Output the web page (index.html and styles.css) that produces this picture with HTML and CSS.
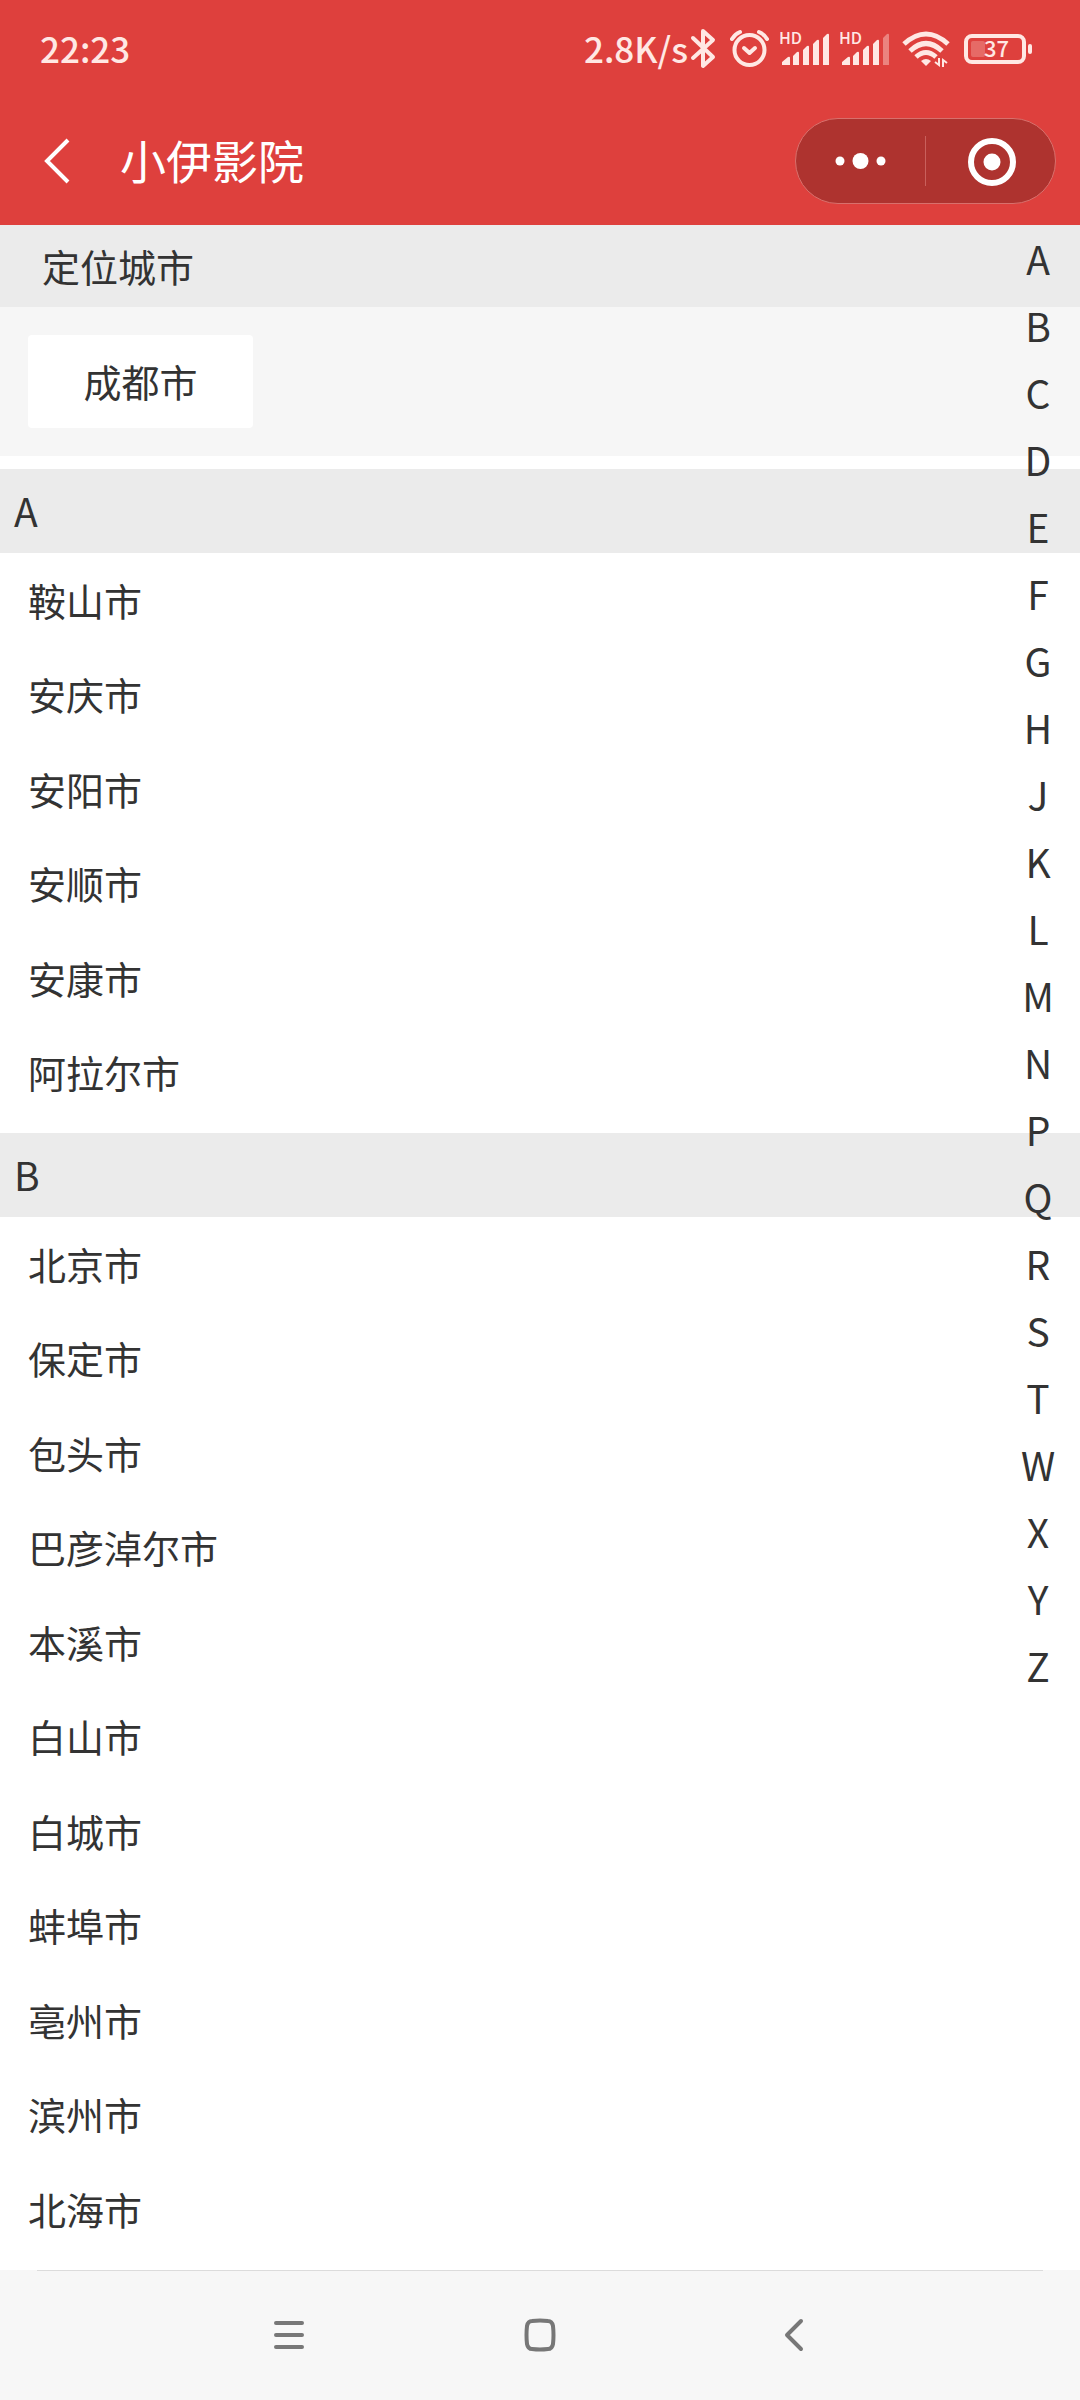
FILE: index.html
```html
<!DOCTYPE html>
<html lang="zh-CN">
<head>
<meta charset="utf-8">
<meta name="viewport" content="width=device-width, initial-scale=1">
<title>小伊影院</title>
<link rel="stylesheet" href="styles.css">
</head>
<body>
<header class="top">
  <div class="status">
    <time class="clock">22:23</time>
    <div class="indicators">
      <div class="network">
        <span>2.8K/s</span>
        <svg width="30" height="44" viewBox="0 0 30 44" fill="none" stroke="currentColor" stroke-width="4" stroke-linecap="round" stroke-linejoin="round" aria-hidden="true"><path d="M3 12 23 31 13 40V5L23 14 3 32"/></svg>
      </div>
      <svg width="40" height="44" viewBox="0 0 40 44" fill="none" stroke="currentColor" stroke-width="4" stroke-linecap="round" stroke-linejoin="round" aria-hidden="true"><circle cx="19.500" cy="24" r="15"/><path d="M2 13Q5 8 10 6M37 13Q34 8 29 6"/><path d="M14 22l5.500 5 5.500-5"/></svg>
      <svg class="signal" width="50" height="44" viewBox="0 0 50 44" fill="currentColor" aria-hidden="true"><text x="-1" y="18">HD</text><path d="M2 39v-3l6-5q2-1 2 1v7zM13 39V30l4-4q2-1 2 1v12zM23 39V24l4-4q2-1 2 1v18zM33 39V18l4-4q2-1 2 1v24zM43 39V12l4-4q2-1 2 1v30z"/></svg>
      <svg class="signal" width="50" height="44" viewBox="0 0 50 44" fill="currentColor" aria-hidden="true"><text x="-1" y="18">HD</text><path d="M2 39v-3l6-5q2-1 2 1v7zM13 39V30l4-4q2-1 2 1v12zM23 39V24l4-4q2-1 2 1v18zM33 39V18l4-4q2-1 2 1v24z"/><path opacity=".4" d="M43 39V12l4-4q2-1 2 1v30z"/></svg>
      <svg width="50" height="44" viewBox="0 0 50 44" fill="none" stroke="currentColor" stroke-width="5" aria-hidden="true"><path d="M4 18Q26-2 48 18M10 25Q26 10 42 25M16 31Q26 22 36 31"/><path d="M26 40l-5-5q5-4 10 0z" fill="currentColor" stroke="none"/><path d="M39 32v7l-4-3M43 41v-7l4 3" stroke-width="2"/></svg>
      <svg class="battery" width="72" height="44" viewBox="0 0 72 44" fill="currentColor" aria-hidden="true"><rect x="6" y="10" width="58" height="26" rx="6" fill="none" stroke="currentColor" stroke-width="4"/><rect x="11" y="15" width="14" height="16" rx="2" opacity=".25"/><rect x="68" y="18" width="4" height="10" rx="2"/><text x="24" y="31">37</text></svg>
    </div>
  </div>
  <div class="titlebar">
    <button class="back" aria-label="返回"><svg width="26" height="46" viewBox="0 0 26 46" fill="none" stroke="currentColor" stroke-width="4"><path d="M24 2 3 23 24 44"/></svg></button>
    <h1>小伊影院</h1>
    <div class="capsule">
      <button aria-label="更多"><svg width="52" height="50" viewBox="0 0 52 50" fill="currentColor"><circle cx="5" cy="25" r="4.500"/><circle cx="25.500" cy="25" r="8"/><circle cx="46" cy="25" r="4.500"/></svg></button>
      <button aria-label="关闭"><svg width="50" height="50" viewBox="0 0 50 50"><circle cx="26" cy="26" r="21" fill="none" stroke="currentColor" stroke-width="6"/><circle cx="26" cy="26" r="8.500" fill="currentColor"/></svg></button>
    </div>
  </div>
</header>

<main class="content">
  <section>
    <h2 class="located-title">定位城市</h2>
    <div class="located"><button class="chip">成都市</button></div>
  </section>
  <section id="A">
    <h2 class="letter">A</h2>
    <ul class="cities">
      <li><a href="#">鞍山市</a></li>
      <li><a href="#">安庆市</a></li>
      <li><a href="#">安阳市</a></li>
      <li><a href="#">安顺市</a></li>
      <li><a href="#">安康市</a></li>
      <li><a href="#">阿拉尔市</a></li>
    </ul>
  </section>
  <section id="B">
    <h2 class="letter">B</h2>
    <ul class="cities">
      <li><a href="#">北京市</a></li>
      <li><a href="#">保定市</a></li>
      <li><a href="#">包头市</a></li>
      <li><a href="#">巴彦淖尔市</a></li>
      <li><a href="#">本溪市</a></li>
      <li><a href="#">白山市</a></li>
      <li><a href="#">白城市</a></li>
      <li><a href="#">蚌埠市</a></li>
      <li><a href="#">亳州市</a></li>
      <li><a href="#">滨州市</a></li>
      <li><a href="#">北海市</a></li>
    </ul>
  </section>
  <nav class="index" aria-label="字母索引">
    <a href="#A">A</a><a href="#B">B</a><a href="#C">C</a><a href="#D">D</a><a href="#E">E</a><a href="#F">F</a><a href="#G">G</a><a href="#H">H</a><a href="#J">J</a><a href="#K">K</a><a href="#L">L</a><a href="#M">M</a><a href="#N">N</a><a href="#P">P</a><a href="#Q">Q</a><a href="#R">R</a><a href="#S">S</a><a href="#T">T</a><a href="#W">W</a><a href="#X">X</a><a href="#Y">Y</a><a href="#Z">Z</a>
  </nav>
</main>

<footer class="sysnav">
  <button aria-label="菜单"><svg width="32" height="34" viewBox="0 0 32 34" fill="none" stroke="currentColor" stroke-width="4" stroke-linecap="round"><path d="M4 5h26M4 17h26M4 29h26"/></svg></button>
  <button aria-label="主页"><svg width="32" height="34" viewBox="0 0 32 34" fill="none" stroke="currentColor" stroke-width="4"><path d="M8 3Q16 2 24 3 28 3 29 8 30 17 29 26 28 31 24 31 16 32 8 31 4 31 3 26 2 17 3 8 4 3 8 3z"/></svg></button>
  <button aria-label="后退"><svg width="32" height="34" viewBox="0 0 32 34" fill="none" stroke="currentColor" stroke-width="4" stroke-linecap="round" stroke-linejoin="round"><path d="M25 3 11 17 25 31"/></svg></button>
</footer>
</body>
</html>
```
FILE: styles.css
```css
* {
  box-sizing: border-box;
}

body {
  margin: 0;
  min-height: 100vh;
  display: flex;
  flex-direction: column;
  background: #fff;
  color: #333;
  font-family: "Noto Sans CJK SC", sans-serif;
  font-size: 38px;
  line-height: 56px;
}

h1,
h2,
ul {
  margin: 0;
  padding: 0;
  font-weight: 400;
  list-style: none;
}

a {
  color: inherit;
  text-decoration: none;
}

button {
  padding: 0;
  border: 0;
  background: none;
  color: inherit;
  font: inherit;
}

svg {
  display: block;
}

.top {
  background: #de403d;
  color: #fff;
}

.status {
  display: flex;
  align-items: center;
  justify-content: space-between;
  height: 96px;
  padding: 0 48px 0 40px;
  color: #ffe8e4;
  font-size: 35px;
  font-weight: 500;
}

.indicators {
  display: flex;
  align-items: center;
  gap: 10px;
}

.network {
  display: flex;
  align-items: center;
  gap: 2px;
}

.signal {
  font-size: 16px;
}

.battery {
  font-size: 22px;
}

.titlebar {
  display: flex;
  align-items: center;
  height: 129px;
  padding: 0 24px 0 44px;
}

.back {
  width: 76px;
}

h1 {
  flex: 1;
  padding-bottom: 4px;
  font-size: 46px;
}

.capsule {
  display: flex;
  align-items: center;
  width: 261px;
  height: 86px;
  border: 1px solid #d8706c;
  border-radius: 43px;
  background: #ae332f;
}

.capsule button {
  flex: 1;
  display: flex;
  justify-content: center;
}

.capsule button + button {
  border-left: 1px solid #c9605c;
}

.content {
  position: relative;
  flex: 1;
}

.located-title {
  padding: 13px 42px;
  background: #ebebeb;
  font-size: 38px;
}

.located {
  margin-bottom: 13px;
  padding: 28px;
  background: #f6f6f6;
}

.chip {
  display: block;
  min-width: 225px;
  height: 93px;
  padding-bottom: 2px;
  border-radius: 4px;
  background: #fff;
}

.letter {
  padding: 13px 14px 15px;
  background: #ebebeb;
  font-size: 39px;
}

.cities {
  padding: 0 28px 13px;
}

.cities a {
  display: block;
  padding: 19px 0;
}

.cities li:nth-child(even) {
  padding-bottom: 1px;
}

.index {
  position: absolute;
  top: 0;
  right: 12px;
  width: 60px;
  display: flex;
  flex-direction: column;
  font-size: 39px;
  line-height: 67px;
  text-align: center;
}

.sysnav {
  display: flex;
  align-items: center;
  justify-content: center;
  gap: 220px;
  height: 130px;
  background: linear-gradient(#dcdcdc, #dcdcdc) center top / calc(100% - 74px) 1px no-repeat #f7f7f7;
  color: #777;
}
```
